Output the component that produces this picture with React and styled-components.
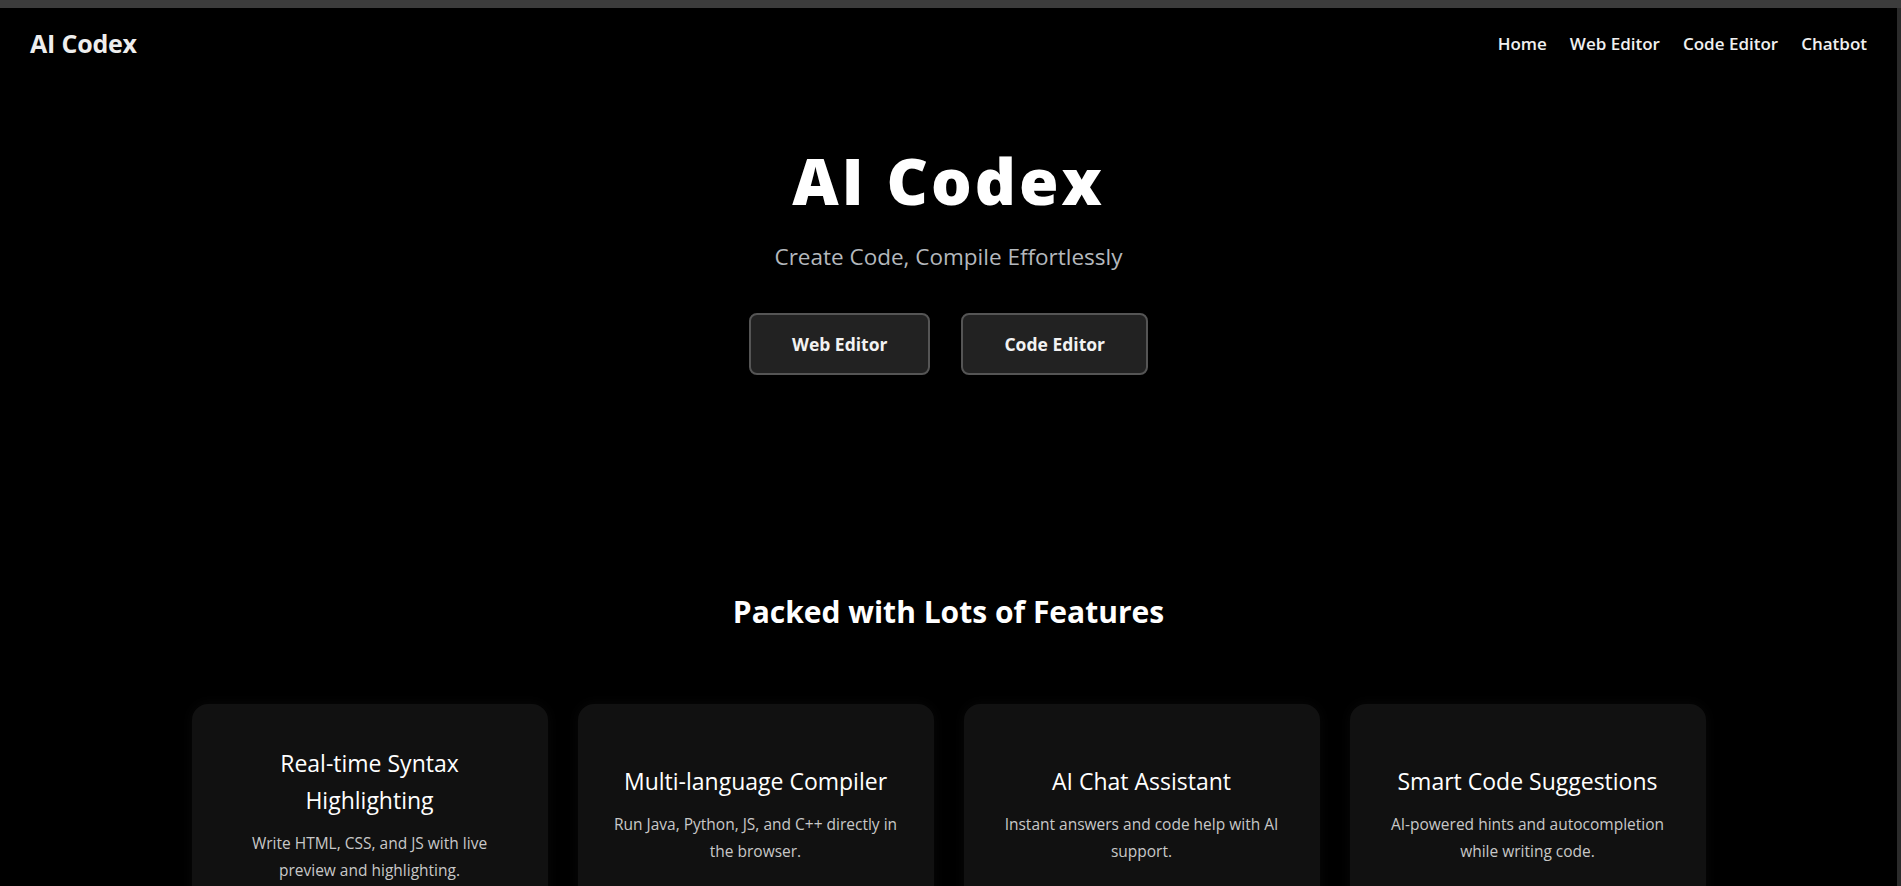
import React from 'react';
import styled, { createGlobalStyle } from 'styled-components';

const features = [
  {
    title: 'Real-time Syntax Highlighting',
    text: 'Write HTML, CSS, and JS with live preview and highlighting.',
  },
  {
    title: 'Multi-language Compiler',
    text: 'Run Java, Python, JS, and C++ directly in the browser.',
  },
  {
    title: 'AI Chat Assistant',
    text: 'Instant answers and code help with AI support.',
  },
  {
    title: 'Smart Code Suggestions',
    text: 'AI-powered hints and autocompletion while writing code.',
  },
];

const App = () => {
  return (
    <>
      <GlobalStyle />
      <Frame>
        <TopEdge />
        <Page>
          <Navbar>
            <Logo>AI Codex</Logo>
            <NavLinks>
              <NavLink href='#'>Home</NavLink>
              <NavLink href='#'>Web Editor</NavLink>
              <NavLink href='#'>Code Editor</NavLink>
              <NavLink href='#'>Chatbot</NavLink>
            </NavLinks>
          </Navbar>

          <Hero>
            <Title>AI Codex</Title>
            <Tagline>Create Code, Compile Effortlessly</Tagline>
            <Actions>
              <ActionButton>Web Editor</ActionButton>
              <ActionButton>Code Editor</ActionButton>
            </Actions>
          </Hero>

          <Features>
            <SectionTitle>Packed with Lots of Features</SectionTitle>
            <CardGrid>
              {features.map((f) => (
                <Card key={f.title}>
                  <CardTitle>{f.title}</CardTitle>
                  <CardText>{f.text}</CardText>
                </Card>
              ))}
            </CardGrid>
          </Features>
        </Page>
      </Frame>
    </>
  );
};

const GlobalStyle = createGlobalStyle`
  * {
    box-sizing: border-box;
  }

  html,
  body {
    margin: 0;
    height: 100%;
    background: #000;
    overflow: hidden;
  }

  body {
    font-family: 'Open Sans', 'Noto Sans', sans-serif;
    color: #fff;
  }
`;

const Frame = styled.div`
  height: 100vh;
  display: flex;
  flex-direction: column;
  background: #000;
`;

const TopEdge = styled.div`
  height: 8px;
  flex-shrink: 0;
  background: #3c3c3c;
`;

const Page = styled.main`
  flex: 1;
  border-right: 4px solid #2b2b2b;
  overflow: hidden;
`;

const Navbar = styled.nav`
  height: 70px;
  padding: 0 30px;
  display: flex;
  align-items: center;
  justify-content: space-between;
`;

const Logo = styled.div`
  font-size: 25px;
  font-weight: 700;
  color: #eee;
  letter-spacing: -0.2px;
`;

const NavLinks = styled.div`
  display: flex;
  gap: 23px;
`;

const NavLink = styled.a`
  font-size: 17px;
  font-weight: 600;
  color: #f0f0f0;
  text-decoration: none;
`;

const Hero = styled.section`
  padding-top: 64px;
  display: flex;
  flex-direction: column;
  align-items: center;
  text-align: center;
`;

const Title = styled.h1`
  margin: 0;
  font-size: 64px;
  line-height: 77px;
  font-weight: 800;
  letter-spacing: 3px;
  color: #fff;
`;

const Tagline = styled.p`
  margin: 21px 0 0;
  font-size: 22.5px;
  line-height: 33px;
  color: #b4b8bd;
`;

const Actions = styled.div`
  margin-top: 40px;
  display: flex;
  gap: 31px;
`;

const ActionButton = styled.button`
  padding: 17px 41px;
  line-height: 24px;
  font-family: inherit;
  font-size: 17.5px;
  font-weight: 700;
  color: #f2f2f2;
  background: #222;
  border: 2px solid #555;
  border-radius: 8px;
  cursor: pointer;
`;

const Features = styled.section`
  margin-top: 218px;
  display: flex;
  flex-direction: column;
  align-items: center;
`;

const SectionTitle = styled.h2`
  margin: 0;
  font-size: 30px;
  line-height: 38px;
  font-weight: 700;
  color: #fff;
`;

const CardGrid = styled.div`
  margin-top: 73px;
  display: grid;
  grid-template-columns: repeat(4, 356px);
  gap: 30px;
`;

const Card = styled.div`
  min-height: 224px;
  padding: 38px 34px 42px;
  display: flex;
  flex-direction: column;
  justify-content: center;
  text-align: center;
  background: #111;
  border-radius: 16px;
  box-shadow: 0 0 14px rgba(255, 255, 255, 0.035);
`;

const CardTitle = styled.h3`
  margin: 0 0 11px;
  font-size: 23px;
  line-height: 37px;
  font-weight: 400;
  color: #fff;
`;

const CardText = styled.p`
  margin: 0;
  font-size: 15.5px;
  line-height: 27px;
  color: #c8c8c8;
`;

export default App;
